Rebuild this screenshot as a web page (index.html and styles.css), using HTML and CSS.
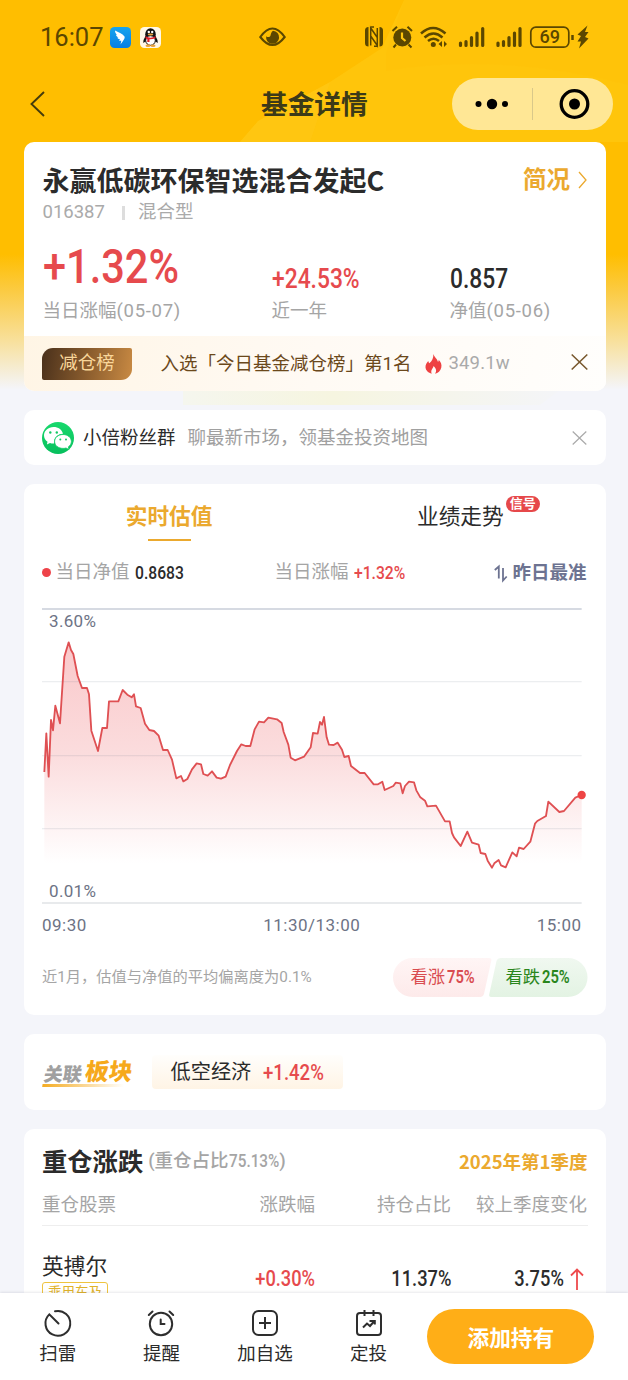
FILE: index.html
```html
<!DOCTYPE html>
<html lang="zh-CN">
<head>
<meta charset="utf-8">
<title>基金详情</title>
<link rel="stylesheet" href="styles.css">
</head>
<body>
<div class="page">
  <svg class="backdrop" viewBox="0 0 628 410" preserveAspectRatio="none">
    <defs>
      <linearGradient id="fade" x1="0" y1="0" x2="0" y2="1">
        <stop offset="0" stop-color="#ffbe00"/><stop offset=".62" stop-color="#ffbe00"/>
        <stop offset=".71" stop-color="#fbcb43"/><stop offset=".83" stop-color="#f8e09b"/><stop offset=".95" stop-color="#f4f5fa"/>
      </linearGradient>
      <linearGradient id="glow" x1="0" y1="0" x2="1" y2="0">
        <stop offset="0" stop-color="#f5f6ee"/><stop offset=".4" stop-color="#f6f5e0"/><stop offset="1" stop-color="#f4f5f8"/>
      </linearGradient>
    </defs>
    <rect width="628" height="410" fill="url(#fade)"/>
    <path d="M183 390H560L540 405H183Z" fill="url(#glow)"/>
    <path d="M404 0H628V142H240L258 121L330 82L382 48Z" fill="#ffd21f" opacity=".34"/>
    <path d="M386 53L404 0H628V85Q500 52 386 71Z" fill="#ffb900" opacity=".1"/>
    <path d="M258 121L330 82L310 142H240Z" fill="#ffd84a" opacity=".1"/>
  </svg>

  <header class="status">
    <span class="clock">16:07</span>
    <svg class="app app-first" width="21" height="21" viewBox="0 0 21 21"><defs><linearGradient id="blue" x1="0" y1="0" x2="0" y2="1"><stop offset="0" stop-color="#16a4ee"/><stop offset="1" stop-color="#087ee4"/></linearGradient></defs><rect width="21" height="21" rx="4.5" fill="url(#blue)"/><path d="M5 3.5C8 5 12.500 6.500 14.500 9.500C15.300 11 13.500 13.500 10.500 17.500L11.300 13.800H9L10 12.300C8 12 7.500 11.200 7.300 10.500H8.500C6.500 9.500 6 8.500 6 7.800H7C5.500 6.500 5 5 5 3.500Z" fill="#fff"/></svg>
    <svg class="app" width="21" height="21" viewBox="0 0 21 21"><rect width="21" height="21" rx="4.500" fill="#fff8e8"/><ellipse cx="10.500" cy="7.500" rx="5.300" ry="6.300" fill="#111"/><path d="M5.500 9Q3 13 3.200 16L5.500 14.500H15.500L17.800 16Q18 13 15.500 9Z" fill="#111"/><ellipse cx="10.500" cy="13.500" rx="4.800" ry="4.800" fill="#fff" stroke="#111"/><ellipse cx="8" cy="18.700" rx="2.500" ry="1.200" fill="#e9a23b"/><ellipse cx="13" cy="18.700" rx="2.500" ry="1.200" fill="#e9a23b"/><circle cx="8.800" cy="5" r="1.200" fill="#fff"/><circle cx="12.200" cy="5" r="1.200" fill="#fff"/><ellipse cx="10.500" cy="7.600" rx="2.800" ry="1" fill="#e9a23b"/><path d="M5.500 9.300Q10.500 12 15.500 9.300V11.300Q12 12.500 9.500 12.300V15H7.300V12Q5.800 11.700 5.500 11Z" fill="#e11f27"/></svg>
    <svg class="eye" width="27" height="20" viewBox="0 0 27 20"><path d="M1.300 10Q13.500 -7 25.700 10Q13.500 26 1.300 10Z" fill="none" stroke="#5b4700" stroke-width="2.100"/><path d="M14 3.800A6.500 6.500 0 1 1 7.200 9.200C8.500 10.500 11 10.300 11.500 8.500C12 6.800 12.200 5 14 3.800Z" fill="#5b4700"/></svg>
    <svg class="signals" width="226" height="26" viewBox="0 0 226 26" fill="none" stroke="#5b4700">
      <path d="M4.500 3Q1 3 1 6.500V19Q1 22.500 4.500 22.500ZM15.500 3Q19 3 19 6.500V19Q19 22.500 15.500 22.500Z" fill="#5b4700" stroke="none"/><path d="M6.700 21.500V4L13.300 13.500V4M6.700 12L13.300 21.500V13" stroke-width="1.500"/><path d="M7 3H10M10 22.300H13" stroke-width="1.500"/>
      <circle cx="38.300" cy="13.500" r="9" fill="#5b4700" stroke="none"/><path d="M38 8.500V14L41.500 17" stroke="#ffc60e" stroke-width="2.200"/><path d="M28.500 7L33 2.800M43.500 2.800L48 7M32 20.500L29.500 23.500M44.500 20.500L47.500 23.500" stroke-width="2"/>
      <path d="M57 9.500Q69 -1.500 81.500 9.500M60.500 13.500Q69.500 5.500 78.500 13.500M64 17Q69.500 12.500 75 17" stroke-width="2.500"/><circle cx="69.300" cy="20.500" r="2.500" fill="#5b4700" stroke="none"/><path d="M78 17V23L74.500 20ZM80 17V23L83 20Z" fill="#5b4700" stroke="none"/>
      <g stroke-width="3.200" stroke-linecap="round"><path d="M96.500 19V21.500M102 17.500V21.500M107.500 13.500V21.500M113 9V21.500M118.700 4.500V21.500M134 19V21.500M139.500 17.500V21.500M145 13.500V21.500M150.500 9V21.500M156 4.500V21.500"/></g>
      <rect x="166.800" y="3.200" width="38" height="20" rx="5" stroke-width="1.700"/><path d="M208.500 11V16" stroke-width="2.500"/><path d="M223.500 1.500L213.500 10.500L217 12L213.500 17.500H217L215 24.500L224.500 14.500L221 13L224.500 8H221Z" fill="#5b4700" stroke="none"/>
      <text x="185.800" y="19.200" class="battery">69</text>
    </svg>
  </header>

  <nav class="nav">
    <svg class="back" width="16" height="26" viewBox="0 0 16 26"><path d="M14 1L1.500 13L14 25" fill="none" stroke="#453c0c" stroke-width="1.900"/></svg>
    <h1>基金详情</h1>
    <div class="capsule">
      <svg width="161" height="52" viewBox="0 0 161 52"><circle cx="26.500" cy="26" r="3"/><circle cx="40" cy="26" r="5.200"/><circle cx="53" cy="26" r="3"/><path d="M80.500 10V42" stroke="#d9c88a"/><circle cx="122.500" cy="26" r="13.300" fill="none" stroke="#000" stroke-width="3.300"/><circle cx="122.500" cy="26" r="5.500"/></svg>
    </div>
  </nav>

  <main class="content">
    <section class="card fund">
      <div class="fund-head"><h2>永赢低碳环保智选混合发起C</h2><span class="brief">简况</span>
        <svg width="9" height="18" viewBox="0 0 9 18"><path d="M1 1L8 9L1 17" fill="none" stroke="#eba92e" stroke-width="1.300"/></svg></div>
      <div class="fund-code"><span>016387</span><i></i><span>混合型</span></div>
      <div class="metrics">
        <div class="metric m1"><div class="value big red"><span class="din">+1.32%</span></div><div class="label">当日涨幅<span>(05-07)</span></div></div>
        <div class="metric m2"><div class="value red"><span class="din">+24.53%</span></div><div class="label">近一年</div></div>
        <div class="metric m3"><div class="value"><span class="din">0.857</span></div><div class="label">净值<span>(05-06)</span></div></div>
      </div>
      <div class="rank">
        <span class="rank-badge">减仓榜</span><span class="rank-text">入选「今日基金减仓榜」第1名</span>
        <svg class="flame" width="17" height="20" viewBox="0 0 17 20"><path d="M8.300 0C9.500 3.500 12.500 5 13 8C13.600 7.300 13.800 6.600 13.700 5.800C15.800 8 17 10.500 16.300 13.500C15.600 17 13 19 10 19.700C11.800 17.500 11.500 14.500 8.500 12C8.600 14.300 5.200 15.500 6.700 19.700C3.500 19 .8 16.500 .5 13.500C.2 10.500 2 8.500 3.300 7C3.500 8 3.700 8.800 4.300 9.300C7 7 8.700 4 8.300 0Z" fill="#ee4142"/></svg>
        <span class="heat">349.1w</span>
        <svg class="close" width="17" height="16" viewBox="0 0 17 16"><path d="M.7 .5L16.300 15.500M16.300 .5L.7 15.500" stroke="#7a5a30" stroke-width="1.600"/></svg>
      </div>
    </section>

    <section class="card group">
      <svg width="32" height="32" viewBox="0 0 32 32"><defs><linearGradient id="wx" x1="0" y1="0" x2="0" y2="1"><stop offset="0" stop-color="#18d96d"/><stop offset="1" stop-color="#07bf5d"/></linearGradient></defs><circle cx="16" cy="16" r="16" fill="url(#wx)"/><path d="M11.500 5C6.200 5 2 8.800 2 13.300C2 16 3.300 18.300 5.500 19.800L4.900 22.500L8 21C9.300 21.400 10.400 21.600 12 21.500C11.500 15.800 15.500 12 21 11.800C20 7.700 16.300 5 11.500 5Z" fill="#fff"/><path d="M21 12.500C16.300 12.500 12.600 15.600 12.600 19.500C12.600 23.400 16.300 26.400 21 26.400C22.100 26.400 23 26.300 24 26L27 27.500L26.400 24.800C28.300 23.500 29.400 21.600 29.400 19.500C29.400 15.600 25.700 12.500 21 12.500Z" fill="#fff" stroke="#0ecb65" stroke-width=".8"/><g fill="#12c963"><circle cx="8.300" cy="10.500" r="1.200"/><circle cx="14.800" cy="10.500" r="1.200"/><circle cx="18.300" cy="17.500" r="1"/><circle cx="24" cy="17.500" r="1"/></g></svg>
      <span class="group-name">小倍粉丝群</span><span class="group-note">聊最新市场，领基金投资地图</span>
      <svg class="close" width="15" height="14" viewBox="0 0 15 14"><path d="M.7 .5L14.300 13.500M14.300 .5L.7 13.500" stroke="#aaa" stroke-width="1.200"/></svg>
    </section>

    <section class="card estimate">
      <div class="tabs"><div class="tab active">实时估值</div><div class="tab">业绩走势<span class="signal">信号</span></div></div>
      <div class="legend">
        <i class="dot"></i><span class="key">当日净值</span><span class="din small nav-value">0.8683</span>
        <span class="key change-key">当日涨幅</span><span class="din small red">+1.32%</span>
        <span class="accuracy"><svg width="14" height="18" viewBox="0 0 14 18"><path d="M.8 6L4.800 2.500V14.500M9 4V16.500L12.700 12.500" fill="none" stroke="#6d7391" stroke-width="1.800"/></svg>昨日最准</span>
      </div>
      <div class="chart">
        <svg width="545" height="300" viewBox="36 18 1635 900">
          <defs><linearGradient id="area" gradientUnits="userSpaceOnUse" x1="0" y1="127" x2="0" y2="790"><stop offset="0" stop-color="#fac8ca"/><stop offset=".5" stop-color="#fbdcdd"/><stop offset="1" stop-color="#fff"/></linearGradient></defs>
          <path fill="url(#area)" d="M43 516L49 400L56 530L63 360L69 391L76 317L90 370L103 170L116 127L123 150L130 162L143 228L156 264L171 264L177 283L184 392L204 453L217 384H231L237 304H265L278 270L292 284L305 292L312 283L318 319L332 324L345 371L358 390L372 393L386 407L399 450H413L426 479L439 535L453 528L460 544L472 537L486 508L500 490L513 493L520 522L533 527L546 514L560 533L573 536L587 530L600 495L621 453L634 433L647 438H661L674 388L687 365L702 367L715 353L741 358L755 369L761 396L775 434L782 473L795 481L822 470L842 442L849 399L863 401L870 366L876 374L882 351L890 412L897 434L911 435L923 428L936 449L943 471L956 468L963 498L990 519H1004L1031 553H1044L1057 545L1064 570L1090 558L1097 548L1111 550L1118 580L1125 558L1137 545L1152 547L1159 571L1171 592L1185 602L1192 619L1218 617L1245 664H1259L1266 699L1272 712L1292 738L1312 695L1326 728L1346 734L1352 759L1366 762L1373 782L1386 803L1393 790L1406 780L1413 796L1427 802L1447 757L1460 769L1467 743L1481 747L1501 725L1515 671L1522 663L1548 648L1555 605L1588 636L1602 633L1636 593L1655 585V790H43Z"/>
          <g fill="none" stroke="#526476" stroke-opacity=".11" stroke-width="4"><path d="M36 245H1655M36 467H1655M36 686H1655"/></g>
          <path d="M36 27H1655" stroke="#c9ced9" stroke-width="5"/><path d="M36 909H1655" stroke="#e1e3e6" stroke-width="5"/>
          <path fill="none" stroke="#df5053" stroke-width="5.500" stroke-linejoin="round" d="M43 516L49 400L56 530L63 360L69 391L76 317L90 370L103 170L116 127L123 150L130 162L143 228L156 264L171 264L177 283L184 392L204 453L217 384H231L237 304H265L278 270L292 284L305 292L312 283L318 319L332 324L345 371L358 390L372 393L386 407L399 450H413L426 479L439 535L453 528L460 544L472 537L486 508L500 490L513 493L520 522L533 527L546 514L560 533L573 536L587 530L600 495L621 453L634 433L647 438H661L674 388L687 365L702 367L715 353L741 358L755 369L761 396L775 434L782 473L795 481L822 470L842 442L849 399L863 401L870 366L876 374L882 351L890 412L897 434L911 435L923 428L936 449L943 471L956 468L963 498L990 519H1004L1031 553H1044L1057 545L1064 570L1090 558L1097 548L1111 550L1118 580L1125 558L1137 545L1152 547L1159 571L1171 592L1185 602L1192 619L1218 617L1245 664H1259L1266 699L1272 712L1292 738L1312 695L1326 728L1346 734L1352 759L1366 762L1373 782L1386 803L1393 790L1406 780L1413 796L1427 802L1447 757L1460 769L1467 743L1481 747L1501 725L1515 671L1522 663L1548 648L1555 605L1588 636L1602 633L1636 593L1655 585"/>
          <circle cx="1655" cy="585" r="12.500" fill="#ee4444"/>
          <g class="axis"><text x="57" y="81">3.60%</text><text x="57" y="891">0.01%</text></g>
        </svg>
      </div>
      <div class="times"><span>09:30</span><span>11:30/13:00</span><span>15:00</span></div>
      <div class="estimate-foot">
        <span class="deviation">近1月，估值与净值的平均偏离度为0.1%</span>
        <div class="votes">
          <svg class="votes-bg" width="195" height="39" viewBox="0 0 195 39"><defs><linearGradient id="up" x1="0" y1="0" x2="0" y2="1"><stop offset="0" stop-color="#fff5f5"/><stop offset="1" stop-color="#fdeaea"/></linearGradient><linearGradient id="down" x1="0" y1="0" x2="0" y2="1"><stop offset="0" stop-color="#f0f8f0"/><stop offset="1" stop-color="#e3f3e3"/></linearGradient></defs><path d="M19.500 0H96Q99 0 98.200 3L91 36Q90 39 87 39H19.500A19.500 19.500 0 0 1 19.500 0Z" fill="url(#up)"/><path d="M108 0H175A19.500 19.500 0 0 1 175 39H98Q95.500 39 96.300 36L103.500 3Q104.500 0 108 0Z" fill="url(#down)"/></svg>
          <span class="vote rise">看涨<span class="din small">75%</span></span><span class="vote fall">看跌<span class="din small">25%</span></span>
        </div>
      </div>
    </section>

    <section class="card sector">
      <div class="sector-logo"><span class="logo-grey">关联</span><span class="logo-gold">板块</span></div>
      <div class="chip"><span>低空经济</span><span class="din mid red">+1.42%</span></div>
    </section>

    <section class="card holdings">
      <div class="holdings-head"><h3>重仓涨跌</h3><span class="share">(重仓占比<span class="din small">75.13%</span>)</span><span class="quarter">2025年第1季度</span></div>
      <div class="grid thead"><span>重仓股票</span><span>涨跌幅</span><span>持仓占比</span><span>较上季度变化</span></div>
      <div class="grid trow">
        <div class="stock"><span>英搏尔</span><span class="tag">乘用车及</span></div>
        <span class="cell"><span class="din mid red">+0.30%</span></span><span class="cell"><span class="din mid">11.37%</span></span>
        <span class="cell last"><span class="din mid">3.75%</span><svg width="14" height="22" viewBox="0 0 14 22"><path d="M7 22V1.500M1 7.500L7 1.500L13 7.500" fill="none" stroke="#ee4a4d" stroke-width="1.800"/></svg></span>
      </div>
    </section>
  </main>

  <footer class="toolbar">
    <div class="tool"><svg width="28" height="28" viewBox="0 0 28 28"><path d="M11 2.300A12.400 12.400 0 1 1 5.300 5.400L14.500 14.500" fill="none" stroke="#2e2e2e" stroke-width="2" stroke-linecap="round"/></svg><span>扫雷</span></div>
    <div class="tool"><svg width="28" height="28" viewBox="0 0 28 28"><g fill="none" stroke="#2e2e2e" stroke-width="2" stroke-linecap="round"><circle cx="14" cy="15" r="11.200"/><path d="M1.800 6L5.500 2.500M22.500 2.500L26.200 6M13.700 10.500V15H17.500"/></g></svg><span>提醒</span></div>
    <div class="tool"><svg width="28" height="28" viewBox="0 0 28 28"><g fill="none" stroke="#2e2e2e" stroke-width="2"><rect x="2" y="2" width="24" height="24" rx="5.500"/><path d="M14 8V20M8 14H20"/></g></svg><span>加自选</span></div>
    <div class="tool"><svg width="28" height="28" viewBox="0 0 28 28"><g fill="none" stroke="#2e2e2e" stroke-width="2"><path d="M5 4H23Q26 4 26 7V23Q26 26 23 26H5Q2 26 2 23V7Q2 4 5 4Z"/><path d="M9.500 1V7M18.500 1V7M8 18.500L12 14.500L15 17L19 12.500M14.500 12H19.800V15.500"/></g></svg><span>定投</span></div>
    <button class="add">添加持有</button>
  </footer>
</div>
</body>
</html>
```

FILE: styles.css
```css
* { box-sizing: border-box; }
body { margin: 0; background: #f4f5fa; font-family: Roboto, "Noto Sans CJK SC", sans-serif; font-size: 18.5px; line-height: 1; color: #2b2b2b; }
h1, h2, h3 { margin: 0; font-weight: 700; font-family: "Noto Sans CJK SC", sans-serif; }
svg { display: block; flex: none; overflow: visible; }
span, div { white-space: nowrap; }
.page { position: relative; width: 628px; height: 1380px; overflow: hidden; display: flex; flex-direction: column; }
.backdrop { position: absolute; left: 0; top: 0; width: 628px; height: 410px; z-index: -1; }
.red { color: #e64a4d; }

.din { display: inline-block; font-family: Roboto, sans-serif; font-weight: 500; transform: scaleX(.87); transform-origin: left center; }
.small { font-size: 18px; }
.mid { font-size: 22px; }

.status { height: 74px; display: flex; align-items: center; padding-left: 40px; }
.clock { font-size: 25.500px; width: 70px; color: #5b4700; padding-top: 2px; }
.app { margin-right: 98px; }
.app-first { margin-right: 9px; }
.eye { margin-right: 78px; }
.battery { font: 500 18px Roboto, sans-serif; fill: #5b4700; stroke: none; text-anchor: middle; }

.nav { height: 68px; padding-left: 30px; display: flex; align-items: flex-start; }
.back { margin-top: 17px; }
.nav h1 { width: 123px; margin: 12px 68px 0 215px; font-size: 26.700px; line-height: 34px; color: #3c3a18; }
.capsule { width: 161px; height: 52px; margin-top: 4px; border-radius: 26px; background: #ffe795; }

.content { padding: 0 22px 0 23.500px; display: flex; flex-direction: column; gap: 19px; }
.card { background: #fff; border-radius: 10px; flex: none; }

.fund { height: 249px; overflow: hidden; display: flex; flex-direction: column; }
.fund-head { display: flex; align-items: center; height: 34px; padding: 0 19px; margin-top: 21px; }
.fund-head h2 { font-size: 27px; line-height: 34px; }
.brief { margin: 2px 8px 0 auto; font-size: 23.500px; font-weight: 700; color: #eba92e; }
.fund-code { display: flex; align-items: center; height: 28px; margin-top: 1px; padding-left: 19px; color: #aaa; }
.fund-code i { width: 3px; height: 14px; background: #ddd; margin: 1px 13px 0 17px; }
.metrics { display: flex; padding-left: 19px; height: 96px; margin-top: 14px; }
.metric { display: flex; flex-direction: column; }
.m1 { width: 229px; }
.m2 { width: 178px; }
.value { height: 68px; display: flex; align-items: flex-end; padding-bottom: 15px; font-size: 27px; }
.value .din { transform: scaleX(.845); }
.value.big { font-size: 48px; padding-bottom: 17px; }
.value.big .din { transform: scaleX(.865); }
.metrics .label { color: #a5a5a5; line-height: 20px; margin-top: -7px; }
.label span { letter-spacing: .7px; }
.rank { margin-top: auto; height: 55px; display: flex; align-items: center; padding: 0 18.500px; background: linear-gradient(100deg, #fff5e5, #fffaf4 50%, #fffefc); }
.rank-badge { width: 90px; height: 32px; line-height: 31px; text-align: center; border-radius: 11px 2px 11px 2px; background: linear-gradient(100deg, #49301b, #8f602f 55%, #c98a43); color: #f9d69a; }
.rank-text { margin: 2px 14px 0 28.500px; color: #6b481b; }
.heat { margin-left: 6px; color: #aaa; letter-spacing: .2px; }
.close { margin-left: auto; }
.rank .close { margin-bottom: 4px; }

.group { height: 55px; display: flex; align-items: center; padding: 0 19px 0 18.500px; }
.group-name { margin: 1px 12px 0 9px; }
.group-note { margin-top: 1px; color: #a0a0a0; }

.estimate { height: 531px; padding: 0 18.500px; }
.tabs { display: flex; margin: 0 -18.500px; height: 66px; }
.tab { position: relative; flex: 1; text-align: center; font-size: 21.700px; line-height: 66px; }
.tab.active { color: #eba92e; font-weight: 700; }
.tab.active::after { content: ""; position: absolute; left: 50%; bottom: 9px; width: 43px; height: 2px; margin-left: -21.500px; background: #eba92e; }
.signal { position: absolute; left: 191px; top: 12px; width: 34px; height: 16px; border-radius: 8px; background: #e6484a; color: #fff; font-size: 13px; font-weight: 700; line-height: 15px; }
.legend { height: 45px; display: flex; align-items: center; }
.dot { width: 9px; height: 9px; border-radius: 50%; background: #ee4349; margin-right: 4.500px; }
.key { color: #a5a5a5; }
.legend .din { margin-left: 5px; }
.nav-value { width: 140px; }
.accuracy { margin-left: auto; display: flex; gap: 4px; color: #6d7391; font-weight: 700; padding-right: 1px; padding-top: 1px; }
.chart { height: 300px; margin-top: 11px; }
.axis text { font: 51px Roboto, sans-serif; fill: #6d7385; letter-spacing: 1px; }
.times { height: 38px; padding-right: 6px; display: flex; justify-content: space-between; align-items: center; color: #6d7385; font-size: 17px; letter-spacing: .5px; }
.estimate-foot { margin-top: 14px; height: 39px; display: flex; justify-content: space-between; align-items: center; }
.deviation { font-size: 15.250px; color: #a5a5a5; }
.votes { position: relative; width: 195px; height: 39px; display: flex; align-items: center; padding-left: 18px; }
.votes-bg { position: absolute; left: 0; top: 0; }
.vote { position: relative; width: 95px; flex: none; font-size: 17.300px; }
.vote .din { margin-left: 1.500px; font-weight: 600; transform: scaleX(.82); }
.rise { color: #d94c50; }
.fall { color: #2a861c; }

.sector { height: 76px; display: flex; align-items: center; padding: 0 18.500px; }
.sector-logo { position: relative; width: 91px; height: 28px; margin: 4px 19px 0 0; padding-left: 2px; display: flex; align-items: center; gap: 3px; transform: skewX(-8deg); font-weight: 900; }
.sector-logo::after { content: ""; position: absolute; left: 2px; bottom: 1px; width: 82px; height: 3px; background: linear-gradient(90deg, #f5ac22, #fff); }
.logo-grey { font-size: 19px; color: #a0a0a0; }
.logo-gold { font-size: 23.500px; color: #f6a91c; margin-top: -2px; }
.chip { width: 191px; height: 34px; padding-left: 18.500px; display: flex; align-items: center; gap: 12px; font-size: 20.200px; border-radius: 4px; background: linear-gradient(#fffefc, #fff4e5); }
.chip .din { transform: scaleX(.845); padding-top: 1px; }

.holdings { height: 210px; padding: 0 18.500px; }
.holdings-head { height: 63px; display: flex; align-items: center; }
.holdings-head h3 { font-size: 25.300px; line-height: 32px; margin-bottom: 2px; }
.share { margin: 2px 0 0 5px; font-weight: 500; color: #a5a5a5; }
.share .din { margin-right: -8.500px; transform: scaleX(.85); }
.quarter { margin: 2px 0 0 auto; color: #eba92e; font-family: "Noto Sans CJK SC", sans-serif; font-weight: 700; }
.grid { display: grid; grid-template-columns: 173px 100px 136px 136px; }
.thead { height: 34px; padding-top: 4px; color: #a5a5a5; border-bottom: 1px solid #eee; text-align: right; }
.thead span:first-child { text-align: left; }
.stock { display: flex; flex-direction: column; align-items: flex-start; font-size: 21.700px; padding-top: 30px; }
.tag { margin-top: 4px; width: 66px; height: 24px; border: 1px solid #efc43f; border-radius: 3px; font-size: 13.500px; line-height: 18px; text-align: center; color: #dfb22a; }
.cell { display: flex; justify-content: flex-end; padding-top: 42px; }
.cell .din { transform: scaleX(.83); transform-origin: right center; }
.last { gap: 6px; padding-right: 3px; }

.toolbar { position: absolute; left: 0; top: 1293px; width: 628px; height: 87px; background: #fff; box-shadow: 0 -1px 2px rgba(80, 80, 100, .12); display: flex; padding-left: 6px; }
.tool { width: 103.600px; padding-top: 16px; display: flex; flex-direction: column; align-items: center; gap: 8px; }
.add { margin: 16px 0 0 7px; width: 167px; height: 55px; padding: 0; border: 0; border-radius: 28px; background: #ffae17; color: #fff; font: 700 21.700px/54px "Noto Sans CJK SC", sans-serif; }
```
